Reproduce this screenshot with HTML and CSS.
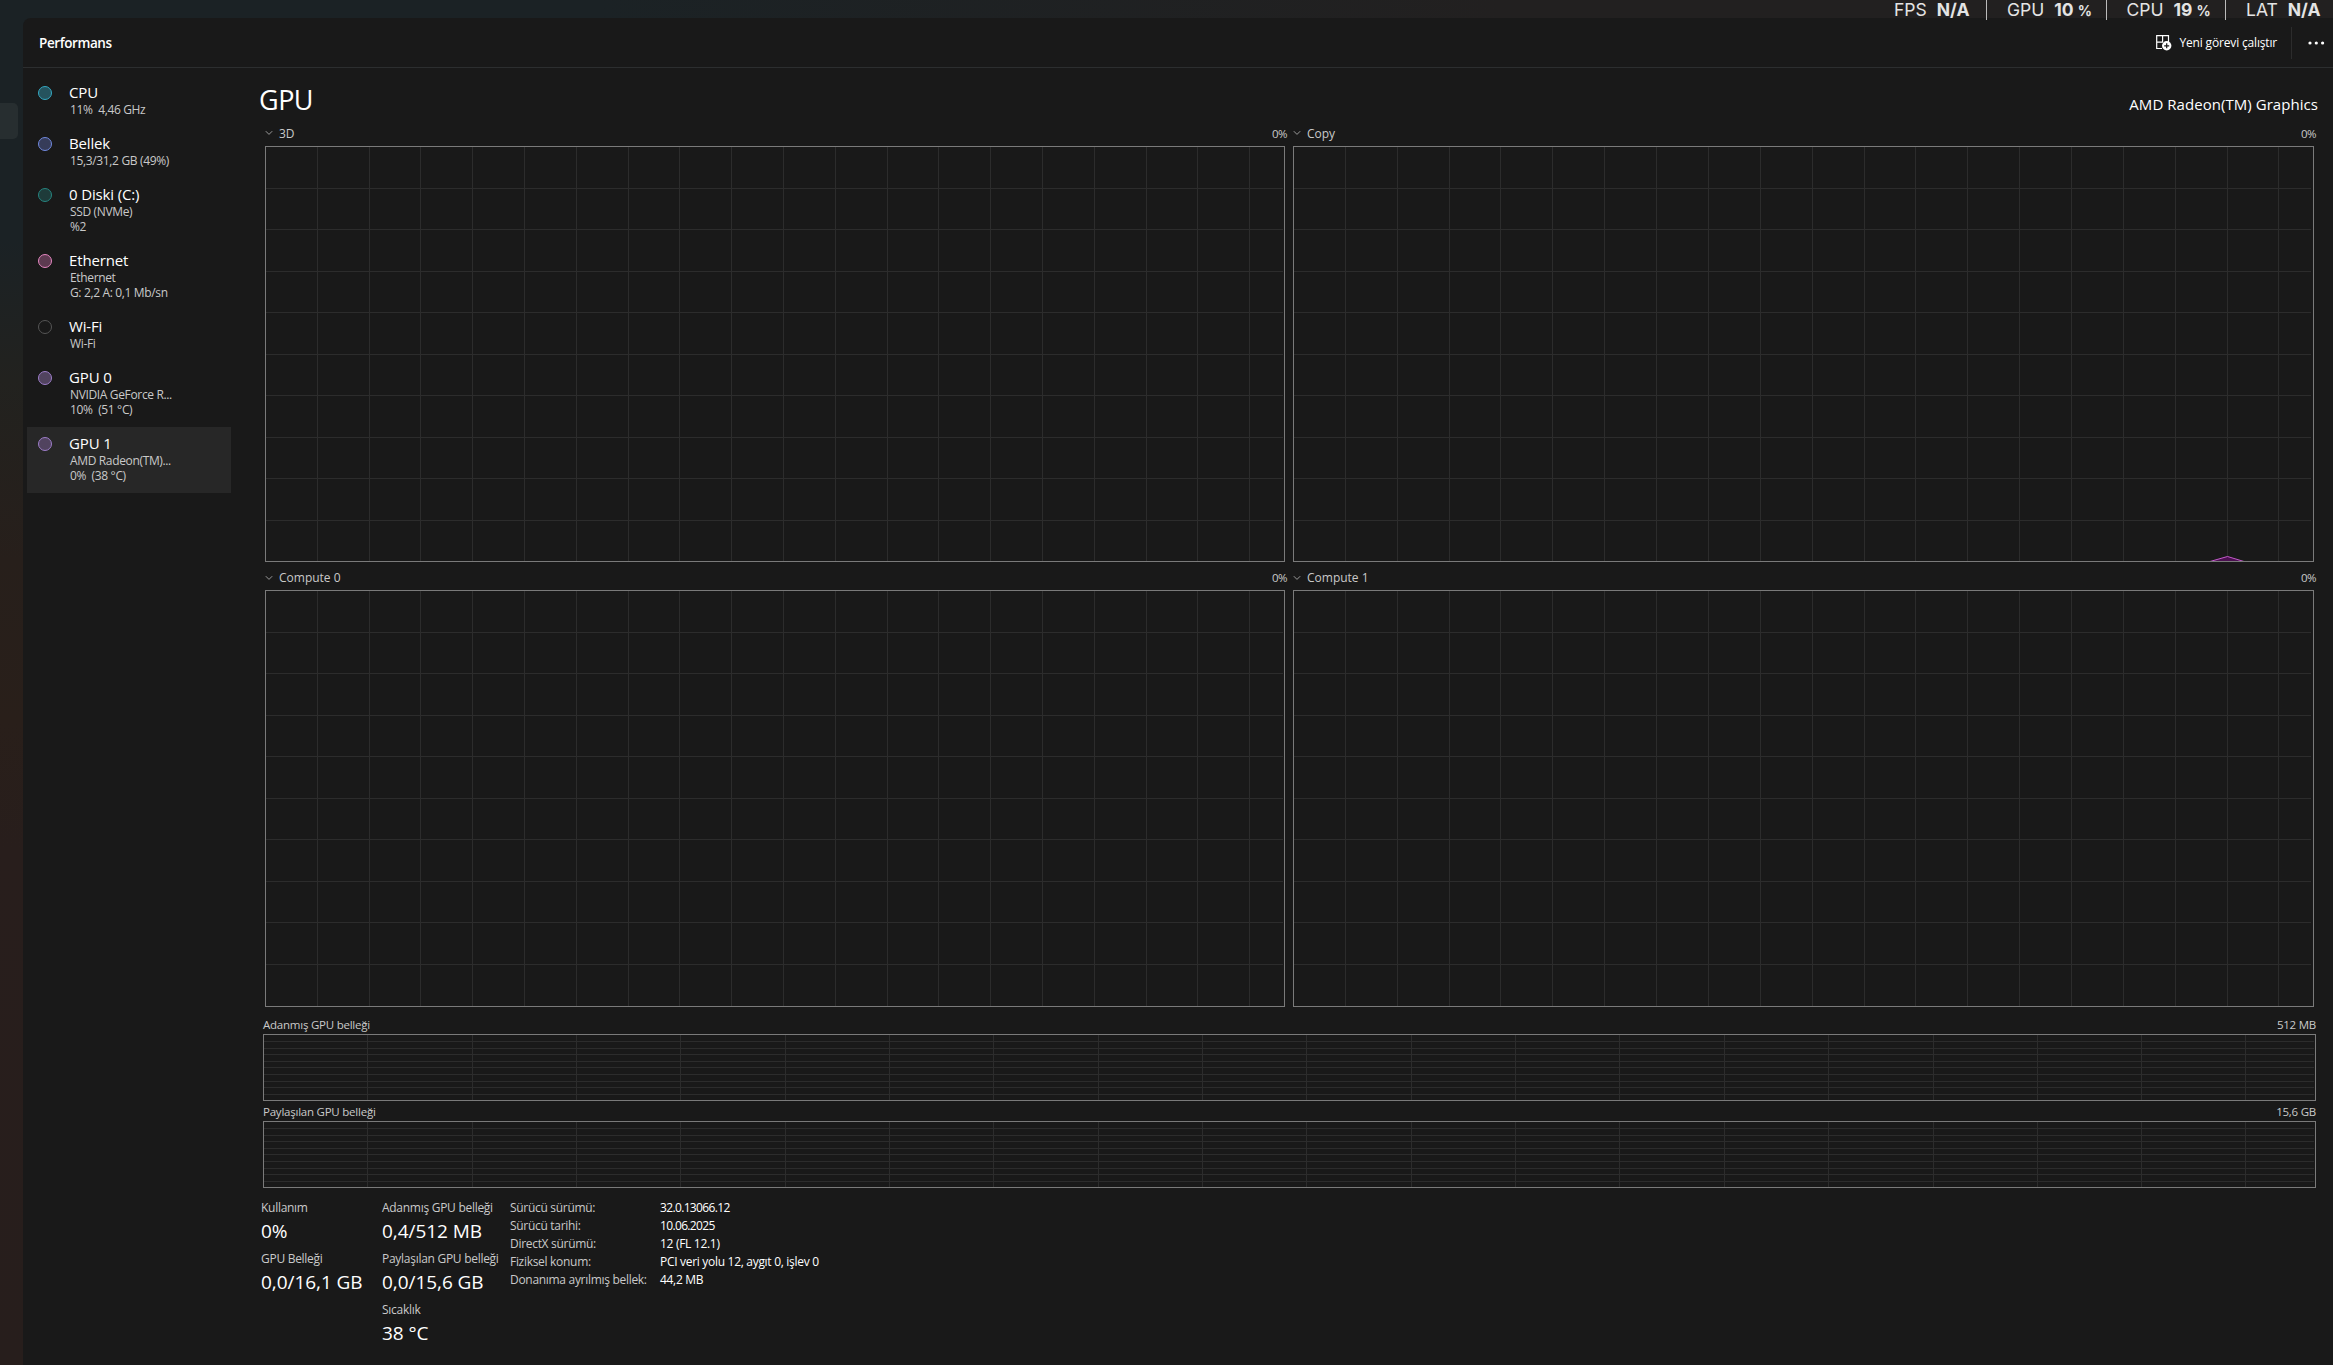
FILE: index.html
```html
<!DOCTYPE html>
<html lang="tr">
<head>
<meta charset="utf-8">
<title>Performans</title>
<link rel="stylesheet" href="styles.css">
</head>
<body>
<svg width="0" height="0" class="defs">
  <defs>
    <symbol id="chev" viewBox="0 0 8 6"><path d="M.8 1.2 4 4.4 7.2 1.2" fill="none" stroke="#9a9a9a"/></symbol>
    <path id="rows" d="M0 42.5H1018M0 83.5H1018M0 125.5H1018M0 166.5H1018M0 208.5H1018M0 249.5H1018M0 291.5H1018M0 332.5H1018M0 374.5H1018"/>
    <path id="cols-a" d="M52.5 0V416M104.500 0V416M155.500 0V416M207.500 0V416M259.500 0V416M311.500 0V416M363.500 0V416M414.500 0V416M466.500 0V416M518.500 0V416M570.500 0V416M622.500 0V416M673.500 0V416M725.500 0V416M777.500 0V416M829.500 0V416M881.500 0V416M932.500 0V416M984.500 0V416"/>
    <path id="cols-b" d="M52.5 0V416M104.500 0V416M156.500 0V416M207.500 0V416M259.500 0V416M311.500 0V416M363.500 0V416M415.500 0V416M467.500 0V416M519.500 0V416M571.500 0V416M622.500 0V416M674.500 0V416M726.500 0V416M778.500 0V416M830.500 0V416M882.500 0V416M934.500 0V416M985.500 0V416"/>
    <path id="mem" d="M0 7.500H2051M0 14.500H2051M0 20.500H2051M0 27.500H2051M0 33.500H2051M0 40.500H2051M0 47.500H2051M0 53.500H2051M0 60.500H2051M104.500 0V67M209.500 0V67M313.500 0V67M417.500 0V67M522.500 0V67M626.500 0V67M730.500 0V67M835.500 0V67M939.500 0V67M1043.500 0V67M1148.500 0V67M1252.500 0V67M1356.500 0V67M1461.500 0V67M1565.500 0V67M1670.500 0V67M1774.500 0V67M1878.500 0V67M1982.500 0V67"/>
  </defs>
</svg>
<div class="window">
  <header class="overlay">
    <div class="stat fps"><span>FPS</span><b>N/A</b></div>
    <div class="stat"><span>GPU</span><b>10<i>%</i></b></div>
    <div class="stat"><span>CPU</span><b>19<i>%</i></b></div>
    <div class="stat lat"><span>LAT</span><b>N/A</b></div>
  </header>
  <div class="body">
    <div class="strip"><div class="strip-item"></div></div>
    <div class="panel">
      <div class="toolbar">
        <h1>Performans</h1>
        <div class="run">
          <svg width="16" height="16" viewBox="0 0 16 16"><path d="M6 13.500H.7V.7H12.500V5.500M.7 7.100H7M6.600 .7V7.100M12.500 5V7" fill="none" stroke="#fff" stroke-width="1.200"/><circle cx="10.700" cy="10.800" r="4.700" fill="#fff"/><path d="M10.700 8.300v5M8.200 10.800h5" stroke="#191919" stroke-width="1.200"/></svg>
          <span>Yeni görevi çalıştır</span>
        </div>
        <div class="more"><svg width="17" height="4" viewBox="0 0 17 4"><g fill="#fff"><circle cx="2" cy="2" r="1.600"/><circle cx="8.300" cy="2" r="1.600"/><circle cx="14.600" cy="2" r="1.600"/></g></svg></div>
      </div>
      <div class="content">
        <nav class="list">
          <div class="item"><span class="dot cpu"></span><div><h2>CPU</h2><p>11%&nbsp; 4,46 GHz</p></div></div>
          <div class="item"><span class="dot ram"></span><div><h2>Bellek</h2><p>15,3/31,2 GB (49%)</p></div></div>
          <div class="item tall"><span class="dot disk"></span><div><h2>0 Diski (C:)</h2><p>SSD (NVMe)</p><p>%2</p></div></div>
          <div class="item tall"><span class="dot eth"></span><div><h2>Ethernet</h2><p>Ethernet</p><p>G: 2,2 A: 0,1 Mb/sn</p></div></div>
          <div class="item"><span class="dot wifi"></span><div><h2>Wi-Fi</h2><p>Wi-Fi</p></div></div>
          <div class="item tall"><span class="dot gpu"></span><div><h2>GPU 0</h2><p>NVIDIA GeForce R...</p><p>10%&nbsp; (51 °C)</p></div></div>
          <div class="item tall active"><span class="dot gpu"></span><div><h2>GPU 1</h2><p>AMD Radeon(TM)...</p><p>0%&nbsp; (38 °C)</p></div></div>
        </nav>
        <main>
          <div class="title"><h2>GPU</h2><span>AMD Radeon(TM) Graphics</span></div>
          <div class="charts">
            <section><div class="cap"><svg width="8" height="6"><use href="#chev"/></svg><span>3D</span><em>0%</em></div>
              <svg class="plot" width="1020" height="416"><g class="grid"><use href="#rows"/><use href="#cols-a"/></g><rect x=".5" y=".5" width="1019" height="415"/></svg></section>
            <section><div class="cap"><svg width="8" height="6"><use href="#chev"/></svg><span>Copy</span><em>0%</em></div>
              <svg class="plot" width="1021" height="416"><g class="grid"><use href="#rows"/><use href="#cols-b"/></g><path class="usage" d="M917 415.500 934.500 410.500 951 415.500"/><rect x=".5" y=".5" width="1020" height="415"/></svg></section>
            <section><div class="cap"><svg width="8" height="6"><use href="#chev"/></svg><span>Compute 0</span><em>0%</em></div>
              <svg class="plot" width="1020" height="417"><g class="grid"><use href="#rows"/><use href="#cols-a"/></g><rect x=".5" y=".5" width="1019" height="416"/></svg></section>
            <section><div class="cap"><svg width="8" height="6"><use href="#chev"/></svg><span>Compute 1</span><em>0%</em></div>
              <svg class="plot" width="1021" height="417"><g class="grid"><use href="#rows"/><use href="#cols-b"/></g><rect x=".5" y=".5" width="1020" height="416"/></svg></section>
          </div>
          <div class="memory">
            <div class="mcap"><span>Adanmış GPU belleği</span><span class="size">512 MB</span></div>
            <svg class="plot" width="2053" height="67"><g class="grid"><use href="#mem"/></g><rect x=".5" y=".5" width="2052" height="66"/></svg>
            <div class="mcap"><span>Paylaşılan GPU belleği</span><span class="size">15,6 GB</span></div>
            <svg class="plot" width="2053" height="67"><g class="grid"><use href="#mem"/></g><rect x=".5" y=".5" width="2052" height="66"/></svg>
          </div>
          <div class="stats">
            <div class="figures first">
              <div><label>Kullanım</label><strong>0%</strong></div>
              <div><label>GPU Belleği</label><strong>0,0/16,1 GB</strong></div>
            </div>
            <div class="figures second">
              <div><label>Adanmış GPU belleği</label><strong>0,4/512 MB</strong></div>
              <div><label>Paylaşılan GPU belleği</label><strong>0,0/15,6 GB</strong></div>
              <div><label>Sıcaklık</label><strong>38 °C</strong></div>
            </div>
            <dl>
              <dt>Sürücü sürümü:</dt><dd class="num">32.0.13066.12</dd>
              <dt>Sürücü tarihi:</dt><dd class="num">10.06.2025</dd>
              <dt>DirectX sürümü:</dt><dd>12 (FL 12.1)</dd>
              <dt>Fiziksel konum:</dt><dd>PCI veri yolu 12, aygıt 0, işlev 0</dd>
              <dt>Donanıma ayrılmış bellek:</dt><dd>44,2 MB</dd>
            </dl>
          </div>
        </main>
      </div>
    </div>
  </div>
</div>
</body>
</html>
```
FILE: styles.css
```css
* { box-sizing: border-box; margin: 0; padding: 0; }
html, body { width: 2333px; height: 1365px; overflow: hidden; }
body { font-family: "Open Sans", "Noto Sans", sans-serif; color: #fff; background: #191919; }
svg { display: block; flex: none; }
.defs { position: absolute; }
.window { display: flex; flex-direction: column; height: 1365px; background: linear-gradient(#1b2225 0, #1b2225 240px, #22221f 380px, #271f1b 560px, #291f1a 720px, #281e1c 850px, #271e1c 1365px); }
.overlay { height: 18px; display: flex; justify-content: flex-end; background: linear-gradient(90deg, #1b2225 0, #1b2225 600px, #222020 1500px, #222020); font-family: Inter, sans-serif; }
.stat { display: flex; width: 119.500px; height: 20px; gap: 10px; line-height: 19px; font-size: 17.500px; color: #e4e4e4; white-space: nowrap; position: relative; padding-left: 20px; border-left: 1px solid #bbb; }
.stat.fps { width: 92px; padding-left: 0; border-left: 0; }
.stat.lat { width: 108px; }
.stat b { font-weight: 700; }
.stat i { font-style: normal; font-size: 14px; margin-left: 4px; }
.body { flex: 1; display: flex; }
.strip { width: 23px; padding-top: 85px; }
.strip-item { width: 18px; height: 36px; background: #272e30; border-radius: 0 5px 5px 0; }
.panel { flex: 1; background: #191919; border-top-left-radius: 8px; }
.toolbar { height: 50px; display: flex; align-items: center; border-bottom: 1px solid #2c2e2f; padding-left: 16px; }
.toolbar h1 { font-size: 13.500px; font-weight: 600; flex: 1; letter-spacing: -.4px; padding-top: 1px; }
.run { display: flex; align-items: center; gap: 8px; font-size: 12px; letter-spacing: -.17px; margin-right: 14px; white-space: nowrap; }
.more { height: 32px; border-left: 1px solid #2c2c2c; padding-left: 16px; width: 42px; display: flex; align-items: center; }
.content { display: flex; }
.list { width: 208px; padding: 8px 0 0 4px; margin-right: 28px; }
.item { display: flex; width: 204px; height: 51px; padding: 5px 0 0 11px; white-space: nowrap; }
.item.tall { height: 66px; }
.item.active { background: #272727; }
.item h2 { font-size: 15px; line-height: 22px; font-weight: 400; letter-spacing: -.15px; }
.item p { font-size: 12px; line-height: 15px; color: #c9c9c9; padding-left: 1px; letter-spacing: -.35px; margin-top: -1px; }
.item p + p { margin-top: 0; }
.dot { width: 14px; height: 14px; border-radius: 50%; border: 1px solid; margin: 5px 17px 0 0; flex: none; }
.cpu { background: #25535e; border-color: #35a9c2; }
.ram { background: #363c59; border-color: #7189de; }
.disk { background: #1e3b3a; border-color: #26847f; }
.eth { background: #5c3a50; border-color: #e486bf; }
.wifi { border-color: #555; }
.gpu { background: #51435f; border-color: #9d7dc9; }
main { width: 2074px; }
.title { display: flex; height: 57px; padding-right: 15px; justify-content: space-between; }
.title h2 { font-size: 27px; line-height: 36px; font-weight: 400; padding-top: 14px; letter-spacing: -.5px; }
.title span { font-size: 15px; line-height: 20px; padding-top: 26px; letter-spacing: .05px; }
.charts { display: grid; grid-template-columns: 1020px 1021px; column-gap: 8px; padding-left: 6px; }
.cap { display: flex; align-items: center; height: 21px; padding-bottom: 5px; font-size: 12px; color: #c9c9c9; gap: 6px; margin-right: -2px; }
section:nth-child(n+3) .cap { height: 28px; padding: 3px 0 0; }
.cap em { font-style: normal; margin-left: auto; font-size: 11.500px; letter-spacing: -.5px; }
.plot rect { fill: none; stroke: #7a7a7a; }
.grid { stroke: #2c2c2c; fill: none; shape-rendering: crispEdges; }
.usage { fill: #4b0f50; stroke: #c25bca; }
.memory { padding-left: 4px; }
.mcap { width: 2053px; height: 20px; display: flex; justify-content: space-between; font-size: 11.500px; line-height: 20px; color: #c9c9c9; letter-spacing: -.23px; padding-top: 1px; }
.mcap:first-child { height: 27px; padding-top: 8px; }
.stats { display: flex; padding: 11px 0 0 2px; white-space: nowrap; }
.first { width: 121px; }
.second { width: 128px; }
.figures div { height: 51px; }
.figures label { display: block; font-size: 12px; line-height: 18px; color: #c9c9c9; letter-spacing: -.28px; }
.figures strong { display: block; font-size: 19px; line-height: 28px; font-weight: 400; letter-spacing: -.05px; }
dl { display: grid; grid-template-columns: 150px auto; grid-auto-rows: 18px; font-size: 12px; line-height: 18px; height: 90px; letter-spacing: -.3px; }
dt { color: #c9c9c9; }
dd.num { letter-spacing: -.65px; }
```
